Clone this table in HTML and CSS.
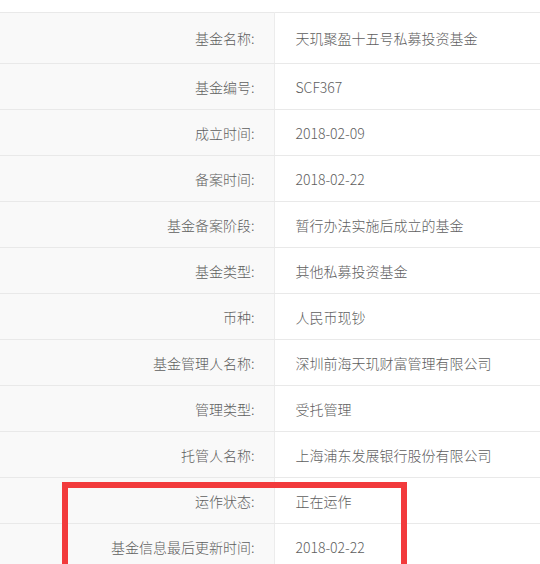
FILE: index.html
```html
<!DOCTYPE html>
<html lang="zh-CN">
<head>
<meta charset="utf-8">
<link rel="stylesheet" href="styles.css">
</head>
<body>
<div class="wrap">
  <table class="info">
    <tr class="first"><td class="lbl">基金名称:</td><td class="val">天玑聚盈十五号私募投资基金</td></tr>
    <tr><td class="lbl">基金编号:</td><td class="val">SCF367</td></tr>
    <tr><td class="lbl">成立时间:</td><td class="val">2018-02-09</td></tr>
    <tr><td class="lbl">备案时间:</td><td class="val">2018-02-22</td></tr>
    <tr><td class="lbl">基金备案阶段:</td><td class="val">暂行办法实施后成立的基金</td></tr>
    <tr><td class="lbl">基金类型:</td><td class="val">其他私募投资基金</td></tr>
    <tr><td class="lbl">币种:</td><td class="val">人民币现钞</td></tr>
    <tr><td class="lbl">基金管理人名称:</td><td class="val">深圳前海天玑财富管理有限公司</td></tr>
    <tr><td class="lbl">管理类型:</td><td class="val">受托管理</td></tr>
    <tr><td class="lbl">托管人名称:</td><td class="val">上海浦东发展银行股份有限公司</td></tr>
    <tr><td class="lbl">运作状态:</td><td class="val">正在运作</td></tr>
    <tr><td class="lbl">基金信息最后更新时间:</td><td class="val">2018-02-22</td></tr>
  </table>
  <div class="mark"></div>
</div>
</body>
</html>
```
FILE: styles.css
```css
html, body {
  margin: 0;
  padding: 0;
  background: #fff;
}
body {
  font-family: "Noto Sans CJK SC", "Microsoft YaHei", sans-serif;
  font-size: 14px;
  font-weight: 300;
  color: #5e5e5e;
  overflow: hidden;
}
.wrap {
  position: relative;
  padding-top: 12px;
  width: 540px;
}
.info {
  width: 540px;
  border-collapse: collapse;
  table-layout: fixed;
}
.info td {
  height: 45px;
  padding: 0;
  border-top: 1px solid #e9e9e9;
  border-bottom: 1px solid #e9e9e9;
  line-height: 20px;
  vertical-align: middle;
  white-space: nowrap;
}
.info tr.first td {
  height: 50px;
}
.info .lbl {
  width: 274px;
  box-sizing: border-box;
  background: #f9f9f9;
  text-align: right;
  padding-right: 19px;
  border-right: 1px solid #ececec;
}
.info .val {
  padding-left: 21px;
}
.mark {
  position: absolute;
  left: 62px;
  top: 482px;
  width: 333px;
  height: 90px;
  border: 6px solid #f23a3c;
}
```
